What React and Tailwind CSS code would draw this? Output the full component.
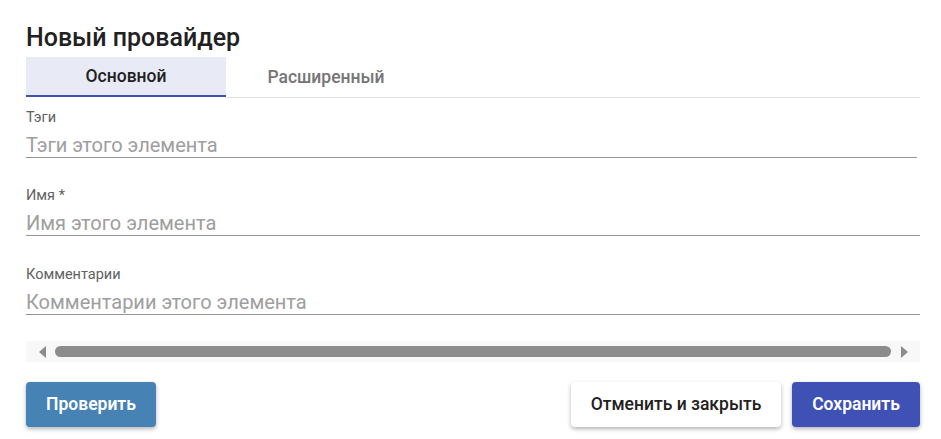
import React, { useState } from 'react';

function Field({ label, placeholder, className = '' }) {
  return (
    <div className={`flex flex-col ${className}`}>
      <label className="h-[16px] text-[14.5px] leading-[16px] text-[#616161]">{label}</label>
      <input
        type="text"
        placeholder={placeholder}
        className="mt-[7px] h-[25px] border-b border-[#949494] bg-transparent text-[20px] leading-[24px] text-[#212121] placeholder:text-[#9e9e9e] outline-none"
      />
    </div>
  );
}

export default function App() {
  const [tab, setTab] = useState(0);

  return (
    <div className="w-[941px] h-[439px] bg-white pl-[26px] pr-[21px] pt-[22px] font-['Roboto',sans-serif]">
      <h1 className="text-[25px] leading-[32px] font-medium text-[#212121]">Новый провайдер</h1>

      {/* Tabs */}
      <div className="mt-[3px] flex items-start">
        <button
          onClick={() => setTab(0)}
          className="w-[200px] h-[40px] bg-[#e8eaf6] border-b-2 border-[#3f51b5] text-[17.5px] font-medium text-[#212121]"
        >
          Основной
        </button>
        <button
          onClick={() => setTab(1)}
          className="w-[200px] h-[41px] border-b border-[#e0e0e0] text-[17.5px] font-medium text-[#757575]"
        >
          Расширенный
        </button>
        <div className="flex-1 h-[41px] border-b border-[#e0e0e0]" />
      </div>

      {/* Fields */}
      <div className="mt-[12px] flex flex-col gap-[30px]">
        <Field label="Тэги" placeholder="Тэги этого элемента" className="mr-[3px]" />
        <Field label="Имя *" placeholder="Имя этого элемента" />
        <Field label="Комментарии" placeholder="Комментарии этого элемента" className="mt-px" />
      </div>

      {/* Horizontal scrollbar */}
      <div className="mt-[26px] h-[21px] bg-[#f8f8f8] flex items-center">
        <div className="w-[29px] flex justify-center pl-[4px]">
          <svg width="7" height="12" viewBox="0 0 7 12">
            <path d="M7 0 L0 6 L7 12 Z" fill="#8c8c8c" />
          </svg>
        </div>
        <div className="flex-1 h-[11px] rounded-full bg-[#8c8c8c]" />
        <div className="w-[29px] flex justify-center pr-[3px]">
          <svg width="7" height="12" viewBox="0 0 7 12">
            <path d="M0 0 L7 6 L0 12 Z" fill="#8c8c8c" />
          </svg>
        </div>
      </div>

      {/* Actions */}
      <div className="mt-[20px] flex items-center">
        <button className="w-[130px] h-[45px] rounded-[4px] bg-[#4682b4] text-white text-[17.5px] font-semibold shadow-[0_2px_4px_rgba(0,0,0,0.3)]">
          Проверить
        </button>
        <div className="flex-1" />
        <button className="w-[210px] h-[45px] rounded-[4px] bg-white text-[#212121] text-[17.5px] font-medium shadow-[0_2px_4px_rgba(0,0,0,0.3)]">
          Отменить и закрыть
        </button>
        <button className="ml-[11px] w-[128px] h-[45px] rounded-[4px] bg-[#3f51b5] text-white text-[17.5px] font-semibold shadow-[0_2px_4px_rgba(0,0,0,0.3)]">
          Сохранить
        </button>
      </div>
    </div>
  );
}
